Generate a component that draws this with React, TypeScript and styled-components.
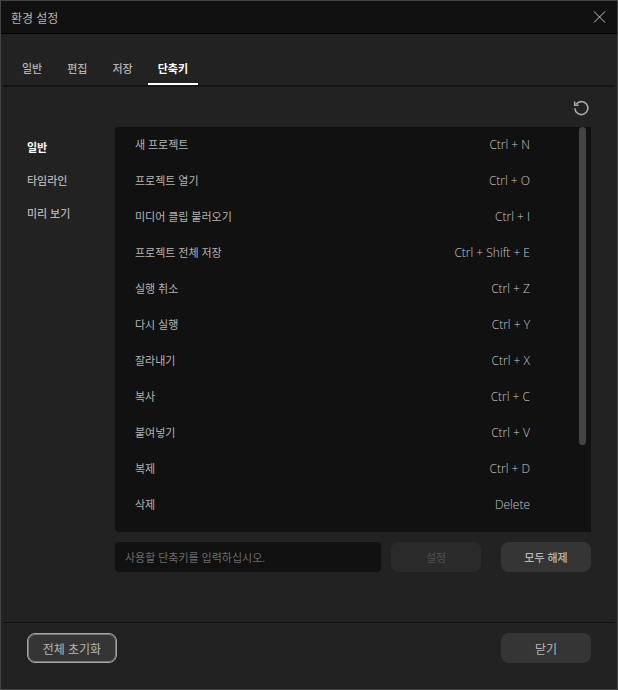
import React, { useState } from "react";
import styled, { createGlobalStyle } from "styled-components";

const GlobalStyle = createGlobalStyle`
  *, *::before, *::after { box-sizing: border-box; }
  body {
    margin: 0;
    background: #222;
    color: #b4b4b4;
    font-family: "Open Sans", "Noto Sans CJK KR", sans-serif;
    font-size: 11px;
    line-height: 16px;
  }
  button, input { font: inherit; color: inherit; }
`;

const Dialog = styled.div`
  display: flex;
  flex-direction: column;
  min-height: 100vh;
  border: 1px solid #444;
  background: #222;
`;

const TitleBar = styled.header`
  display: flex;
  align-items: center;
  justify-content: space-between;
  height: 33px;
  padding: 0 10px;
  border-bottom: 1px solid #000;
  background: #111;
`;

const Title = styled.h1`
  margin: 0;
  padding-top: 4px;
  font-size: 12px;
  font-weight: 400;
`;

const IconButton = styled.button`
  display: flex;
  padding: 0;
  border: 0;
  background: none;
  cursor: pointer;
`;

const Tabs = styled.nav`
  display: flex;
  gap: 5px;
  margin: 16px 2px 0;
  padding: 0 9px;
  border-bottom: 2px solid #151515;
`;

const Tab = styled.button<{ $active: boolean }>`
  min-width: 40px;
  height: 35px;
  padding: 4px 10px 0;
  border: 0;
  border-bottom: 2px solid ${(p) => (p.$active ? "#fff" : "transparent")};
  background: none;
  color: ${(p) => (p.$active ? "#fff" : "#b4b4b4")};
  font-weight: ${(p) => (p.$active ? 700 : 500)};
  cursor: pointer;
`;

const Toolbar = styled.div`
  display: flex;
  justify-content: flex-end;
  padding: 13px 27px 10px;
`;

const Content = styled.main`
  display: grid;
  grid-template-columns: 78px 1fr;
  gap: 10px;
  flex: 1;
  padding: 0 26px;
`;

const Categories = styled.nav`
  display: flex;
  flex-direction: column;
  align-items: flex-start;
  gap: 17px;
  padding-top: 13px;
`;

const Category = styled.button<{ $active: boolean }>`
  padding: 0;
  border: 0;
  background: none;
  color: ${(p) => (p.$active ? "#fff" : "#b4b4b4")};
  font-weight: ${(p) => (p.$active ? 700 : 500)};
  cursor: pointer;
`;

const Panel = styled.section`
  display: flex;
  flex-direction: column;
  gap: 10px;
`;

const ListBox = styled.div`
  display: flex;
  justify-content: space-between;
  height: 405px;
  padding-right: 5px;
  border-radius: 4px 0 0 4px;
  background: #111;
`;

const ShortcutTable = styled.table`
  flex: 1;
  align-self: flex-start;
  margin-right: 49px;
  border-collapse: collapse;
`;

const NameCell = styled.th`
  height: 36px;
  padding: 0 0 0 20px;
  font-weight: 400;
  text-align: left;
`;

const KeyCell = styled.td`
  padding: 0;
  font-family: "Open Sans", sans-serif;
  font-size: 12px;
  font-weight: 300;
  color: #c8c8c8;
  text-align: right;
`;

const ScrollThumb = styled.div`
  width: 7px;
  height: 318px;
  border-radius: 4px;
  background: #444;
`;

const Entry = styled.form`
  display: flex;
  gap: 10px;
`;

const KeyInput = styled.input`
  flex: 1;
  min-width: 0;
  height: 30px;
  padding: 0 10px;
  border: 0;
  border-radius: 4px;
  background: #111;
  &::placeholder { color: #6c6c6c; opacity: 1; }
`;

const Button = styled.button<{ $outlined?: boolean }>`
  width: 90px;
  height: 30px;
  padding: 2px 0 0;
  border: ${(p) => (p.$outlined ? "1px solid #a6a6a6" : "0")};
  box-shadow: ${(p) => (p.$outlined ? "inset 0 0 0 1px #777" : "none")};
  border-radius: 8px;
  background: #353535;
  color: #b8b8b8;
  font-weight: 500;
  cursor: pointer;
  &:disabled { background: #2b2b2b; color: #4a4a4a; cursor: default; }
`;

const ClearButton = styled(Button)`
  margin-left: 10px;
`;

const FooterButton = styled(Button)`
  padding-top: 4px;
  font-size: 12px;
  font-weight: 400;
`;

const Footer = styled.footer`
  display: flex;
  justify-content: space-between;
  margin: 0 2px;
  padding: 10px 24px 26px;
  border-top: 1px solid #111;
`;

const tabs = ["일반", "편집", "저장", "단축키"];
const categories = ["일반", "타임라인", "미리 보기"];
const shortcuts = [
  ["새 프로젝트", "Ctrl + N"],
  ["프로젝트 열기", "Ctrl + O"],
  ["미디어 클립 불러오기", "Ctrl + I"],
  ["프로젝트 전체 저장", "Ctrl + Shift + E"],
  ["실행 취소", "Ctrl + Z"],
  ["다시 실행", "Ctrl + Y"],
  ["잘라내기", "Ctrl + X"],
  ["복사", "Ctrl + C"],
  ["붙여넣기", "Ctrl + V"],
  ["복제", "Ctrl + D"],
  ["삭제", "Delete"],
];

export default function App() {
  const [tab, setTab] = useState(3);
  const [category, setCategory] = useState(0);
  return (
    <>
      <GlobalStyle />
      <Dialog>
        <TitleBar>
          <Title>환경 설정</Title>
          <IconButton aria-label="닫기">
            <svg width="15" height="15" viewBox="0 0 15 15" fill="none" stroke="#c4c4c4">
              <path d="M2 1.500l11 11M13 1.500L2 12.500" />
            </svg>
          </IconButton>
        </TitleBar>
        <Tabs>
          {tabs.map((name, i) => (
            <Tab key={name} $active={i === tab} onClick={() => setTab(i)}>{name}</Tab>
          ))}
        </Tabs>
        <Toolbar>
          <IconButton aria-label="단축키 초기화">
            <svg width="17" height="17" viewBox="0 0 17 17" fill="none" stroke="#a8a8a8" strokeWidth="1.6">
              <path d="M3.200 4.200A6.500 6.500 0 1 1 1.900 8.300" />
              <path d="M1.700 1.500V5.200H5.600" />
            </svg>
          </IconButton>
        </Toolbar>
        <Content>
          <Categories>
            {categories.map((name, i) => (
              <Category key={name} $active={i === category} onClick={() => setCategory(i)}>{name}</Category>
            ))}
          </Categories>
          <Panel>
            <ListBox>
              <ShortcutTable>
                <tbody>
                  {shortcuts.map(([name, keys]) => (
                    <tr key={name}>
                      <NameCell scope="row">{name}</NameCell>
                      <KeyCell>{keys}</KeyCell>
                    </tr>
                  ))}
                </tbody>
              </ShortcutTable>
              <ScrollThumb />
            </ListBox>
            <Entry onSubmit={(e) => e.preventDefault()}>
              <KeyInput aria-label="단축키" placeholder="사용할 단축키를 입력하십시오." />
              <Button disabled>설정</Button>
              <ClearButton type="button">모두 해제</ClearButton>
            </Entry>
          </Panel>
        </Content>
        <Footer>
          <FooterButton $outlined>전체 초기화</FooterButton>
          <FooterButton>닫기</FooterButton>
        </Footer>
      </Dialog>
    </>
  );
}
